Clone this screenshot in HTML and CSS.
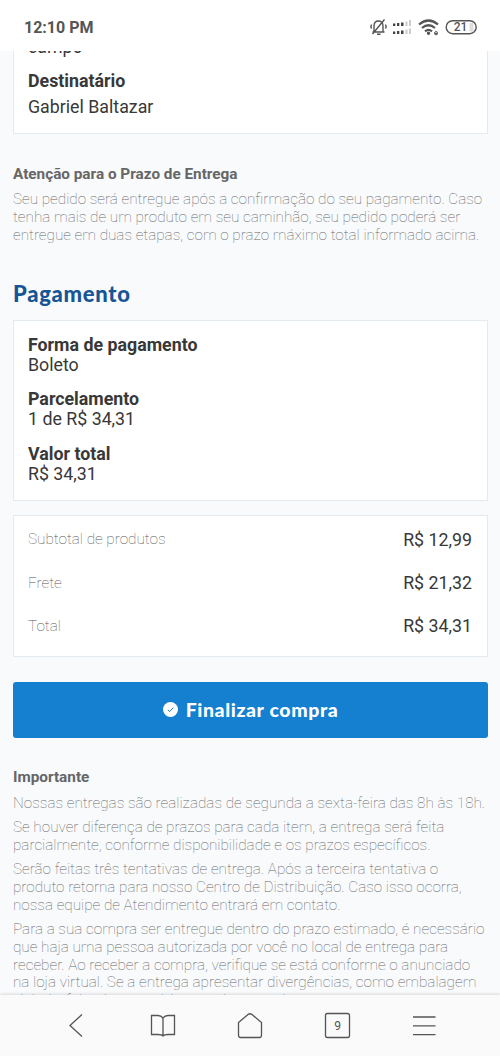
FILE: index.html
```html
<!DOCTYPE html>
<html lang="pt-BR">
<head>
<meta charset="utf-8">
<title>Finalizar compra</title>
<link rel="stylesheet" href="styles.css">
</head>
<body>
<div class="phone">
  <header class="status">
    <span class="clock">12:10 PM</span>
    <svg class="status-icons" width="112" height="24" viewBox="0 0 112 24" fill="none" stroke="#555" stroke-width="1.4">
      <path d="M3.500 17H15.500M5 17V11C5 7.500 7 6 9.500 6S14 7.500 14 11V17M8 19.300H11.500M3.500 19L15.500 4.500M2.500 9.500Q1.300 11.500 2.500 13.500M16.500 9.500Q17.700 11.500 16.500 13.500"/>
      <g stroke="none" fill="#444"><path d="M24 8.500h2.300V11H24zM28 8h2.300v3H28zM32 7.500h2.500V11H32zM24 16.500h2.300V19H24zM28 16h2.300v3H28zM32 15.500h2.500V19H32z"/><path fill="#ccc" d="M36.500 6.500h2V11h-2zM40 5h2v6h-2zM36.500 14.500h2V19h-2zM40 13.500h2V19h-2z"/></g>
      <path stroke-width="2.200" d="M50 9.500Q59.500 1.500 69 9.500M53 13Q59.500 7.500 66 13M56 16.300Q59.500 13.500 63 16.300"/><circle cx="59.500" cy="18.300" r="1" fill="#555"/><path stroke-width="1" d="M65.500 18.500h3q0-2-1.500-2t-1.500 2 3 1"/>
      <rect x="77.200" y="5.700" width="30" height="13" rx="6.500"/><path stroke="#ddd" stroke-width="4" d="M102.500 8v8.500"/>
      <text x="91.500" y="16.300" class="battery" text-anchor="middle">21</text>
    </svg>
  </header>
  <main class="page">
    <section class="card address">
      <div class="value cut">campo</div>
      <div class="label">Destinatário</div>
      <div class="value">Gabriel Baltazar</div>
    </section>
    <section class="notice">
      <h3>Atenção para o Prazo de Entrega</h3>
      <p>Seu pedido será entregue após a confirmação do seu pagamento. Caso<br>tenha mais de um produto em seu caminhão, seu pedido poderá ser<br>entregue em duas etapas, com o prazo máximo total informado acima.</p>
    </section>
    <h2>Pagamento</h2>
    <section class="card payment">
      <div><div class="label">Forma de pagamento</div><div class="value">Boleto</div></div>
      <div><div class="label">Parcelamento</div><div class="value">1 de R$ 34,31</div></div>
      <div><div class="label">Valor total</div><div class="value">R$ 34,31</div></div>
    </section>
    <section class="card totals">
      <div class="row"><span>Subtotal de produtos</span><b>R$ 12,99</b></div>
      <div class="row"><span>Frete</span><b>R$ 21,32</b></div>
      <div class="row"><span>Total</span><b>R$ 34,31</b></div>
    </section>
    <button class="buy"><svg width="15" height="15" viewBox="0 0 15 15"><circle cx="7.500" cy="7.500" r="7.500" fill="#fff"/><path d="M4.800 7.800l1.900 1.800 3.600-4" fill="none" stroke="#1480cf"/></svg><span>Finalizar compra</span></button>
    <section class="notice important">
      <h3>Importante</h3>
      <p>Nossas entregas são realizadas de segunda a sexta-feira das 8h às 18h.</p>
      <p>Se houver diferença de prazos para cada item, a entrega será feita<br>parcialmente, conforme disponibilidade e os prazos específicos.</p>
      <p>Serão feitas três tentativas de entrega. Após a terceira tentativa o<br>produto retorna para nosso Centro de Distribuição. Caso isso ocorra,<br>nossa equipe de Atendimento entrará em contato.</p>
      <p>Para a sua compra ser entregue dentro do prazo estimado, é necessário<br>que haja uma pessoa autorizada por você no local de entrega para<br>receber. Ao receber a compra, verifique se está conforme o anunciado<br>na loja virtual. Se a entrega apresentar divergências, como embalagem<br>violada, falta de acessórios, produto errado, entre outros,</p>
    </section>
  </main>
  <nav class="toolbar">
    <svg viewBox="0 0 30 30"><path d="M21 4.500L9 15.500l12 11"/></svg>
    <svg viewBox="0 0 30 30"><path d="M15 8Q13 5.500 10 5.500H3.500v19H10q4 0 5 1.500 1-1.500 5-1.500h6.500v-19H20q-3 0-5 2.500v18"/></svg>
    <svg viewBox="0 0 30 30"><path d="M3.500 12.500L13 4.500q2-1.500 4 0l9.500 8V25q0 2.500-2 2.500h-19q-2 0-2-2.500z"/></svg>
    <svg viewBox="0 0 30 30"><rect x="3.500" y="3.500" width="24" height="24" rx="2"/><text x="15.500" y="19.500" text-anchor="middle">9</text></svg>
    <svg viewBox="0 0 30 30"><path d="M4 7h22.500M4 15.800h22.500M4 24.700h22.500"/></svg>
  </nav>
</div>
</body>
</html>
```
FILE: styles.css
```css
* { box-sizing: border-box; }
body { margin: 0; font-family: Roboto, sans-serif; color: #383838; }
.phone { width: 500px; height: 1056px; display: flex; flex-direction: column; overflow: hidden; background: #f8fafc; }
.status { height: 51px; flex: none; padding: 3px 19px 0 24px; display: flex; align-items: center; justify-content: space-between; background: #fff; }
.clock { font-size: 16px; font-weight: 700; color: #555; }
.battery { font-size: 12px; font-weight: 500; fill: #555; stroke: none; }
.page { flex: 1; min-height: 0; overflow: hidden; padding: 0 12px 0 13px; white-space: nowrap; }
.card { display: flow-root; background: #fff; border: 1px solid #e3ebf0; padding: 0 15px 0 14px; font-size: 17.800px; }
.label { font-weight: 700; line-height: 21px; }
.value { line-height: 21px; }
.address { height: 83px; border-top: 0; }
.address .cut { margin-top: -15px; height: 34px; }
.address .label { height: 26px; }
.notice { margin-top: 31px; }
h3 { margin: 0; font-size: 15.300px; line-height: 18px; font-weight: 700; color: #666; }
.notice p { margin: 8px 0 0; font-size: 15.270px; line-height: 17.900px; font-weight: 100; color: #666; }
h2 { margin: 36px 0 0; font: 900 22px/26px Lato, sans-serif; letter-spacing: .7px; color: #175594; }
.payment { margin-top: 13px; height: 181px; padding-top: 14px; display: flex; flex-direction: column; gap: 14px; }
.payment .label { line-height: 20px; }
.payment .value { line-height: 20.500px; }
.totals { margin-top: 14px; height: 142px; padding-top: 2px; }
.row { height: 43.300px; display: flex; align-items: center; justify-content: space-between; }
.row span { font-size: 15.300px; font-weight: 100; color: #555; }
.row b { font-weight: 400; }
.buy { margin-top: 25px; width: 475px; height: 56px; border: 0; border-radius: 3px; background: #1480cf; color: #fff; display: flex; align-items: center; justify-content: center; gap: 8px; font: 900 19.500px Lato, sans-serif; letter-spacing: .6px; }
.important { margin-top: 30px; }
.important p { margin-top: 6.200px; }
.important h3 + p { margin-top: 9px; }
.toolbar { height: 61px; flex: none; display: flex; align-items: center; padding: 0 32px 1px; justify-content: space-around; background: #fafafa; box-shadow: 0 -1px 3px #0002; z-index: 1; }
.toolbar svg { width: 30px; height: 30px; fill: none; stroke: #555; stroke-width: 1.300; }
.toolbar text { font-size: 12px; fill: #555; stroke: none; }
```
